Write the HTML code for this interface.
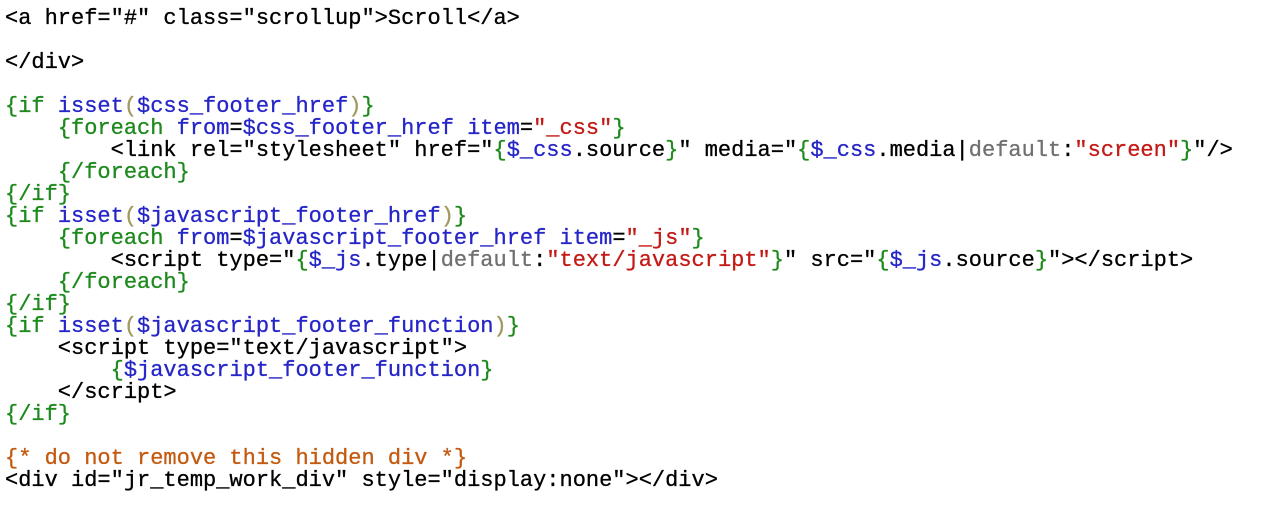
<!DOCTYPE html>
<html><head><meta charset="utf-8"><style>
html,body{margin:0;padding:0;background:#fff;width:1280px;height:508px;overflow:hidden}
pre{position:absolute;left:5px;top:8px;margin:0;font-family:"Liberation Mono",monospace;font-size:22px;line-height:22px;color:#000;-webkit-text-stroke:0.3px currentColor}
.g{color:#1e8a1e}.b{color:#2626c8}.p{color:#a09a60}.r{color:#c41a16}.d{color:#707070}.c{color:#c45a10}
</style></head><body><pre>&lt;a href="#" class="scrollup"&gt;Scroll&lt;/a&gt;

&lt;/div&gt;

<span class="g">{if</span> <span class="b">isset</span><span class="p">(</span><span class="b">$css_footer_href</span><span class="p">)</span><span class="g">}</span>
    <span class="g">{foreach</span> <span class="b">from</span>=<span class="b">$css_footer_href</span> <span class="b">item</span>=<span class="r">"_css"</span><span class="g">}</span>
        &lt;link rel="stylesheet" href="<span class="g">{</span><span class="b">$_css</span>.source<span class="g">}</span>" media="<span class="g">{</span><span class="b">$_css</span>.media|<span class="d">default</span>:<span class="r">"screen"</span><span class="g">}</span>"/&gt;
    <span class="g">{/foreach}</span>
<span class="g">{/if}</span>
<span class="g">{if</span> <span class="b">isset</span><span class="p">(</span><span class="b">$javascript_footer_href</span><span class="p">)</span><span class="g">}</span>
    <span class="g">{foreach</span> <span class="b">from</span>=<span class="b">$javascript_footer_href</span> <span class="b">item</span>=<span class="r">"_js"</span><span class="g">}</span>
        &lt;script type="<span class="g">{</span><span class="b">$_js</span>.type|<span class="d">default</span>:<span class="r">"text/javascript"</span><span class="g">}</span>" src="<span class="g">{</span><span class="b">$_js</span>.source<span class="g">}</span>"&gt;&lt;/script&gt;
    <span class="g">{/foreach}</span>
<span class="g">{/if}</span>
<span class="g">{if</span> <span class="b">isset</span><span class="p">(</span><span class="b">$javascript_footer_function</span><span class="p">)</span><span class="g">}</span>
    &lt;script type="text/javascript"&gt;
        <span class="g">{</span><span class="b">$javascript_footer_function</span><span class="g">}</span>
    &lt;/script&gt;
<span class="g">{/if}</span>

<span class="c">{* do not remove this hidden div *}</span>
&lt;div id="jr_temp_work_div" style="display:none"&gt;&lt;/div&gt;</pre></body></html>
